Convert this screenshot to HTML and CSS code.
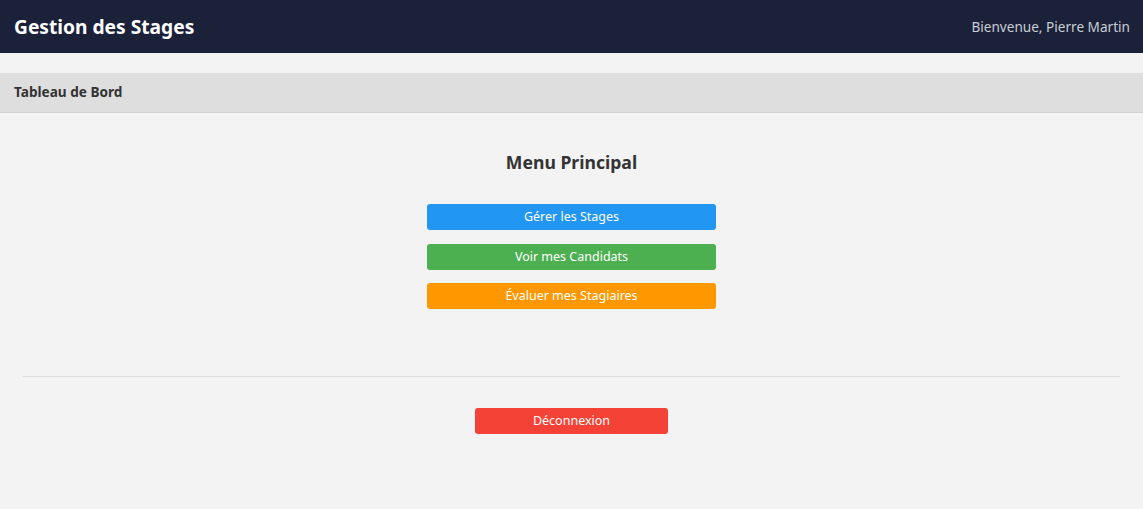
FILE: index.html
```html
<!DOCTYPE html>
<html lang="fr">
<head>
<meta charset="utf-8">
<title>Gestion des Stages</title>
<link rel="stylesheet" href="styles.css">
</head>
<body>
<header class="topbar">
  <h1 class="brand">Gestion des Stages</h1>
  <span class="welcome">Bienvenue, Pierre Martin</span>
</header>
<div class="subbar">Tableau de Bord</div>
<main class="content">
  <h2 class="menu-title">Menu Principal</h2>
  <nav class="menu">
    <button class="btn btn-blue">Gérer les Stages</button>
    <button class="btn btn-green">Voir mes Candidats</button>
    <button class="btn btn-orange">Évaluer mes Stagiaires</button>
  </nav>
  <hr class="divider">
  <div class="logout-wrap">
    <button class="btn btn-red btn-logout">Déconnexion</button>
  </div>
</main>
</body>
</html>
```

FILE: styles.css
```css
* { box-sizing: border-box; }
html, body {
  margin: 0;
  padding: 0;
  background: #f3f3f3;
  font-family: "Noto Sans", "Open Sans", sans-serif;
  height: 100%;
}
.topbar {
  height: 53px;
  background: #1b2139;
  display: flex;
  align-items: center;
  justify-content: space-between;
  padding: 0 13px 0 14px;
}
.brand {
  margin: 0;
  color: #ffffff;
  font-size: 19.2px;
  font-weight: 700;
}
.welcome {
  color: #c9cdd6;
  font-size: 13.6px;
}
.subbar {
  margin-top: 20px;
  height: 40px;
  background: #dedede;
  border-bottom: 1px solid #d2d2d2;
  display: flex;
  align-items: center;
  padding: 0 14px 2px;
  font-size: 13.6px;
  font-weight: 700;
  color: #333;
}
.content {
  padding-top: 38px;
  display: flex;
  flex-direction: column;
  align-items: center;
}
.menu-title {
  margin: 0;
  font-size: 17.6px;
  line-height: 22px;
  font-weight: 700;
  color: #333;
}
.menu {
  margin-top: 31px;
  display: flex;
  flex-direction: column;
  gap: 13.5px;
}
.btn {
  border: none;
  border-radius: 3px;
  color: #fff;
  font-family: "Noto Sans", "Open Sans", sans-serif;
  font-size: 12.5px;
  height: 26px;
  padding: 0 0 1px;
}
.menu .btn { width: 289px; }
.btn-blue { background: #2196f3; }
.btn-green { background: #4caf50; }
.btn-orange { background: #ff9800; }
.btn-red { background: #f44336; }
.divider {
  align-self: stretch;
  margin: 67px 23px 0;
  border: none;
  border-top: 1px solid #dcdcdc;
}
.logout-wrap {
  margin-top: 31px;
}
.btn-logout { width: 193px; }
```
